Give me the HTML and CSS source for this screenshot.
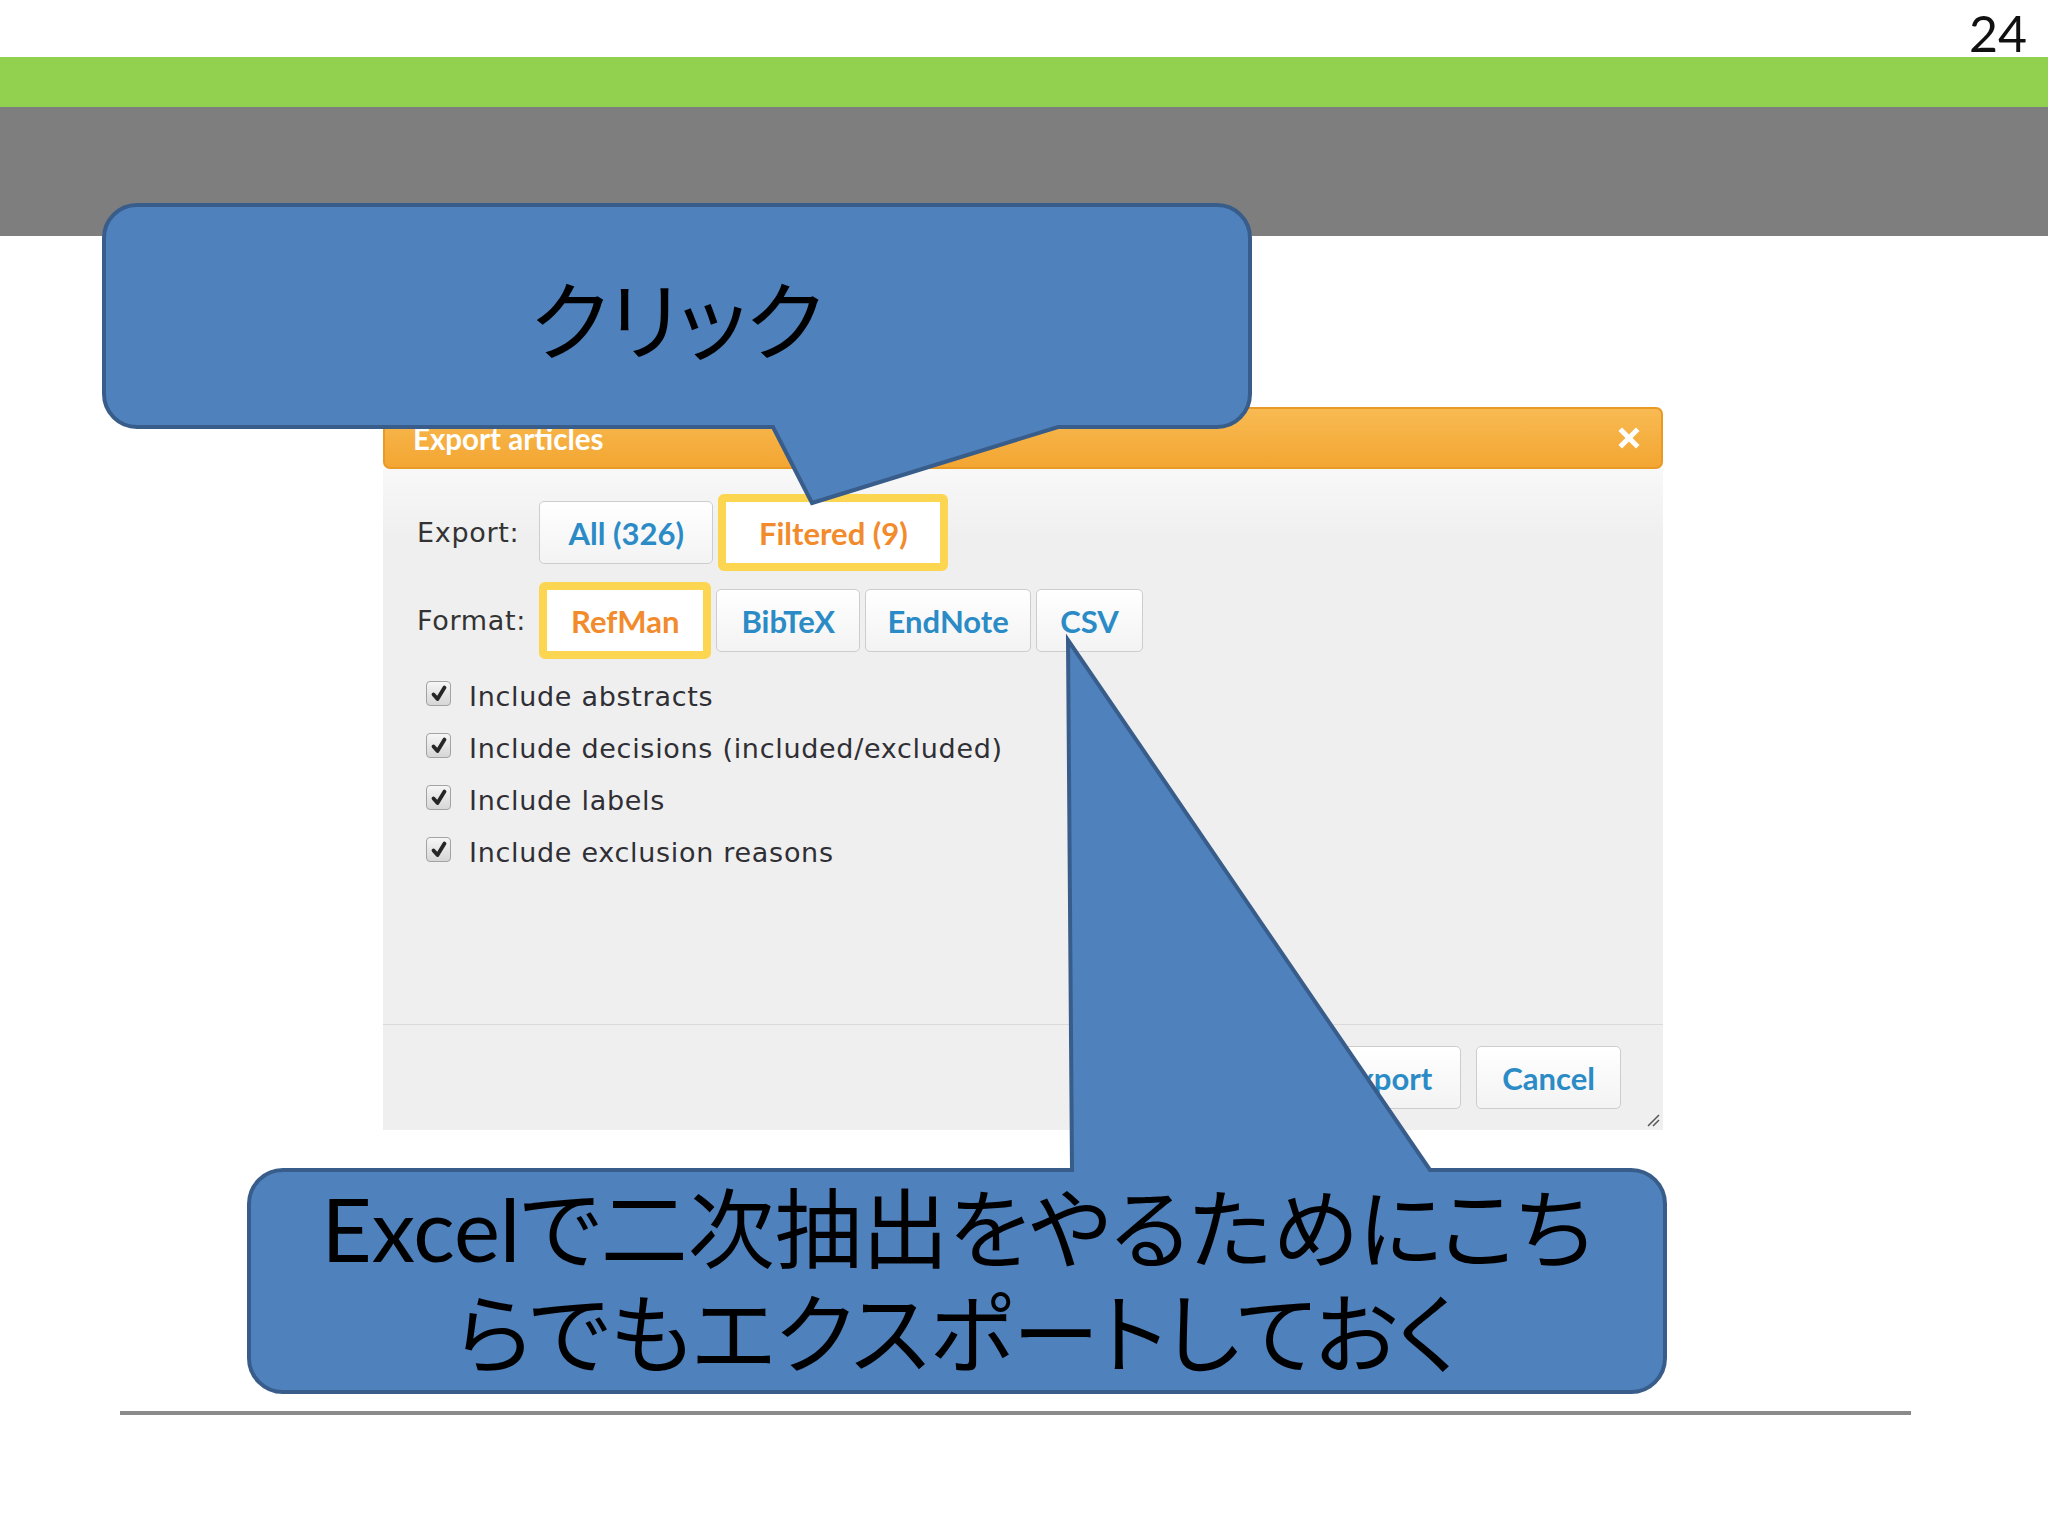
FILE: index.html
```html
<!DOCTYPE html>
<html lang="ja">
<head>
<meta charset="utf-8">
<title>Export articles</title>
<link rel="stylesheet" href="styles.css">
</head>
<body>
<div class="slide">
  <div class="num-row"><span class="num">24</span></div>
  <div class="band-green"></div>
  <div class="band-gray"></div>

  <div class="dialog">
    <div class="dlg-head">
      <span class="dlg-title">Export articles</span>
      <svg class="dlg-close" viewBox="0 0 22 22" width="22" height="22"><path d="M4 4 L18 18 M18 4 L4 18" stroke="#fff" stroke-width="5" stroke-linecap="square"/></svg>
    </div>
    <div class="dlg-body">
      <div class="dlg-content">
        <div class="row">
          <span class="lbl">Export:</span>
          <div class="btns">
            <span class="btn btn-all">All (326)</span>
            <span class="btn btn-hl btn-filtered">Filtered (9)</span>
          </div>
        </div>
        <div class="row">
          <span class="lbl">Format:</span>
          <div class="btns">
            <span class="btn btn-hl btn-refman">RefMan</span>
            <span class="btn btn-bibtex">BibTeX</span>
            <span class="btn btn-endnote">EndNote</span>
            <span class="btn btn-csv">CSV</span>
          </div>
        </div>
        <ul class="checks">
          <li><span class="cb"><svg viewBox="0 0 22 22" width="22" height="22"><path d="M5.5 11.5 L9.5 16 L16.5 4.5" fill="none" stroke="#262626" stroke-width="3.8" stroke-linecap="round" stroke-linejoin="round"/></svg></span>Include abstracts</li>
          <li><span class="cb"><svg viewBox="0 0 22 22" width="22" height="22"><path d="M5.5 11.5 L9.5 16 L16.5 4.5" fill="none" stroke="#262626" stroke-width="3.8" stroke-linecap="round" stroke-linejoin="round"/></svg></span>Include decisions (included/excluded)</li>
          <li><span class="cb"><svg viewBox="0 0 22 22" width="22" height="22"><path d="M5.5 11.5 L9.5 16 L16.5 4.5" fill="none" stroke="#262626" stroke-width="3.8" stroke-linecap="round" stroke-linejoin="round"/></svg></span>Include labels</li>
          <li><span class="cb"><svg viewBox="0 0 22 22" width="22" height="22"><path d="M5.5 11.5 L9.5 16 L16.5 4.5" fill="none" stroke="#262626" stroke-width="3.8" stroke-linecap="round" stroke-linejoin="round"/></svg></span>Include exclusion reasons</li>
        </ul>
      </div>
      <div class="dlg-foot">
        <span class="btn">Export</span>
        <span class="btn btn-cancel">Cancel</span>
        <svg class="grip" viewBox="0 0 14 14" width="14" height="14"><path d="M2 13 L13 2 M7 13 L13 7" stroke="#555" stroke-width="1.5"/></svg>
      </div>
    </div>
  </div>

  <div class="bottom-line"></div>

  <div class="callout callout-1">
    <svg class="callout-shape" viewBox="0 0 1146 298" width="1146" height="298">
      <path d="M33,0 H1113 A33,33 0 0 1 1146,33 V189 A33,33 0 0 1 1113,222 H954 L708,298 L669,222 H33 A33,33 0 0 1 0,189 V33 A33,33 0 0 1 33,0 Z" fill="#4f81bd" stroke="#385d8a" stroke-width="4" stroke-linejoin="miter"/>
    </svg>
    <div class="callout-text callout-text-1">クリック</div>
  </div>

  <div class="callout callout-2">
    <svg class="callout-shape" viewBox="0 0 1416 752" width="1416" height="752">
      <path d="M34,530 H823 L819,0 L1181,530 H1382 A34,34 0 0 1 1416,564 V718 A34,34 0 0 1 1382,752 H34 A34,34 0 0 1 0,718 V564 A34,34 0 0 1 34,530 Z" fill="#4f81bd" stroke="#385d8a" stroke-width="4" stroke-linejoin="miter"/>
    </svg>
    <div class="callout-text callout-text-2">Excelで二次抽出をやるためにこち<br>らでもエクスポートしておく</div>
  </div>
</div>
</body>
</html>
```

FILE: styles.css
```css
* { box-sizing: border-box; }
html, body { margin: 0; padding: 0; }
body { background: #ffffff; font-family: "Lato", "Noto Sans CJK JP", sans-serif; }

.slide {
  position: relative;
  width: 2048px;
  height: 1536px;
  overflow: hidden;
  background: #ffffff;
}

.num-row {
  height: 57px;
  padding: 6px 21px 0 0;
  display: flex;
  justify-content: flex-end;
}
.num {
  font-family: "Lato", sans-serif;
  font-size: 50px;
  line-height: 54px;
  color: #111;
}

.band-green { height: 50px; background: #92d050; }
.band-gray { height: 129px; background: #7f7e7f; }

/* dialog */
.dialog {
  margin: 171px 0 0 383px;
  width: 1280px;
}
.dlg-head {
  height: 62px;
  border: 2px solid #e99a25;
  border-radius: 7px;
  background: linear-gradient(#f8ba52, #f3a632);
  display: flex;
  align-items: center;
  padding: 0 21px 0 28px;
}
.dlg-title {
  color: #ffffff;
  font-family: "Lato", sans-serif;
  font-weight: 700;
  font-size: 29.5px;
}
.dlg-close { margin-left: auto; display: block; }

.dlg-body {
  height: 661px;
  background: linear-gradient(#f8f8f8 0, #efefef 70px, #efefef 100%);
}
.dlg-content {
  height: 555px;
  padding: 25px 0 0 34px;
}
.row {
  display: flex;
  align-items: center;
  height: 77px;
  margin-bottom: 11px;
}
.lbl {
  width: 122px;
  flex: none;
  font-family: "DejaVu Sans", "Verdana", sans-serif;
  font-size: 27px;
  letter-spacing: 0.7px;
  color: #333;
}
.btns { display: flex; align-items: center; gap: 5px; }
.btn {
  display: inline-flex;
  align-items: center;
  justify-content: center;
  height: 63px;
  padding: 0 26px;
  border: 1px solid #cdcdcd;
  border-radius: 5px;
  background: linear-gradient(#ffffff, #f3f3f3);
  color: #2b8bc6;
  font-family: "Lato", sans-serif;
  font-weight: 700;
  font-size: 31px;
  white-space: nowrap;
}
.btn-hl {
  height: 77px;
  border: 8px solid #fcd651;
  border-radius: 6px;
  background: #ffffff;
  color: #f28b2c;
}
.btn-all { padding: 0 28.5px; }
.btn-filtered { padding: 0 32.5px; }
.btn-refman { padding: 0 24px; }
.btn-bibtex { padding: 0 24px; }
.btn-endnote { padding: 0 21.5px; }
.btn-csv { padding: 0 23px; }

.checks {
  list-style: none;
  margin: 0;
  padding: 0 0 0 9px;
}
.checks li {
  height: 52px;
  display: flex;
  align-items: center;
  font-family: "DejaVu Sans", "Verdana", sans-serif;
  font-size: 27px;
  letter-spacing: 0.7px;
  color: #2f2f35;
}
.cb {
  width: 25px;
  height: 25px;
  flex: none;
  margin: -5px 18px 0 0;
  border: 1px solid #a3a3a3;
  border-radius: 4px;
  background: linear-gradient(#f6f6f6, #d6d6d6);
  display: flex;
  align-items: center;
  justify-content: center;
}
.cb svg { display: block; }

.dlg-foot {
  position: relative;
  height: 106px;
  border-top: 1px solid #dadada;
  display: flex;
  align-items: center;
  justify-content: flex-end;
  gap: 15px;
  padding: 0 42px 0 0;
}
.dlg-foot .btn { padding: 0 28px; }
.dlg-foot .btn-cancel { padding: 0 25px; }
.grip {
  position: absolute;
  right: 3px;
  bottom: 3px;
}

.bottom-line {
  margin: 281px 0 0 120px;
  width: 1791px;
  height: 4px;
  background: #8a8a8a;
}

/* callouts */
.callout { position: absolute; }
.callout-1 { left: 104px; top: 205px; width: 1146px; height: 298px; }
.callout-2 { left: 249px; top: 640px; width: 1416px; height: 752px; }
.callout-shape { position: absolute; left: 0; top: 0; overflow: visible; }
.callout-text {
  position: absolute;
  left: 0;
  display: flex;
  align-items: center;
  justify-content: center;
  text-align: center;
  color: #000;
  font-family: "Lato", "Noto Sans CJK JP", sans-serif;
  white-space: nowrap;
}
.callout-text-1 {
  top: 0;
  width: 1146px;
  height: 222px;
  font-family: "Noto Sans CJK JP", sans-serif;
  font-size: 86px;
  font-feature-settings: "palt";
}
.callout-text-2 {
  top: 530px;
  width: 1416px;
  height: 222px;
  font-size: 87px;
  line-height: 105px;
  font-feature-settings: "palt";
}
```
